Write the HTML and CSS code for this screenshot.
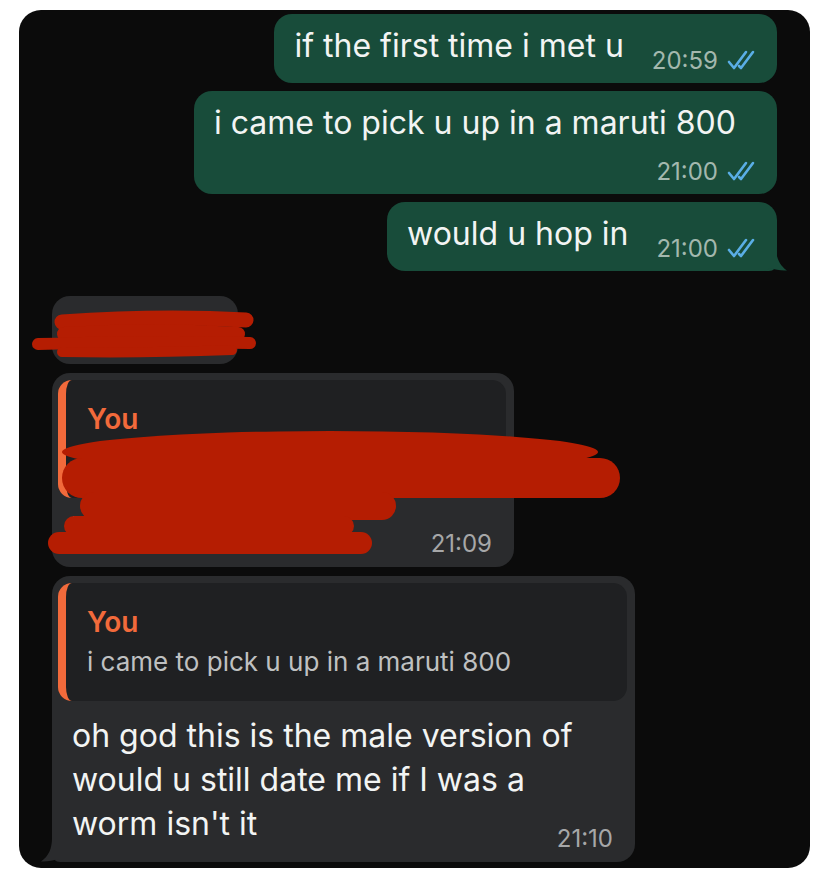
FILE: index.html
```html
<!DOCTYPE html>
<html lang="en">
<head>
    <meta charset="UTF-8">
    <meta name="viewport" content="width=device-width, initial-scale=1.0">
    <title>Chat</title>
    <link rel="stylesheet" href="styles.css">
</head>
<body>

    <div class="chat">
        <div class="bubble out">
            <span class="text">if the first time i met u</span>
            <span class="meta">
                <span class="time">20:59</span>
                <svg class="ticks" viewBox="0 0 30 20"><path d="M2 12 L7 18 L19 2"/><path d="M12 16 L14 18 L26 2"/></svg>
            </span>
        </div>

        <div class="bubble out">
            <span class="text">i came to pick u up in a maruti 800</span>
            <span class="meta next">
                <span class="time">21:00</span>
                <svg class="ticks" viewBox="0 0 30 20"><path d="M2 12 L7 18 L19 2"/><path d="M12 16 L14 18 L26 2"/></svg>
            </span>
        </div>

        <div class="bubble out tail-right">
            <span class="text">would u hop in</span>
            <span class="meta">
                <span class="time">21:00</span>
                <svg class="ticks" viewBox="0 0 30 20"><path d="M2 12 L7 18 L19 2"/><path d="M12 16 L14 18 L26 2"/></svg>
            </span>
            <svg class="tail" viewBox="0 0 24 24"><path d="M0 0 H12 C12 10 15 18 23 23.5 C17 24 11 22.5 6 21 Q2 24 0 24 Z"/></svg>
        </div>

        <div class="bubble in stub"></div>

        <div class="bubble in reply mid">
            <div class="quote">
                <div class="quote-name">You</div>
                <div class="quote-text">&nbsp;</div>
            </div>
            <div class="body">
                <span class="text">Th</span>
                <span class="meta"><span class="time">21:09</span></span>
            </div>
        </div>

        <div class="bubble in reply wide tail-left">
            <div class="quote">
                <div class="quote-name">You</div>
                <div class="quote-text">i came to pick u up in a maruti 800</div>
            </div>
            <div class="body">
                <span class="text">oh god this is the male version of<br>would u still date me if I was a<br>worm isn't it</span>
                <span class="meta"><span class="time">21:10</span></span>
            </div>
            <svg class="tail" viewBox="0 0 24 24"><path d="M24 0 H12 C12 10 9 18 1 23.5 C7 24 13 22.5 18 21 Q22 24 24 24 Z"/></svg>
        </div>
    </div>

    <!-- scribbled-out bits -->
    <svg class="scribble" viewBox="0 0 828 879">
        <g stroke-linecap="round" fill="none">
            <path d="M62 322 C120 318 190 317 246 320" stroke-width="15"/>
            <path d="M64 334 C130 330 190 331 238 334" stroke-width="14"/>
            <path d="M38 344 C110 342 190 341 250 343" stroke-width="12"/>
            <path d="M62 352 C120 353 180 352 232 350" stroke-width="10"/>
        </g>
        <g>
            <ellipse cx="330" cy="452" rx="268" ry="21"/>
            <rect x="62" y="458" width="558" height="40" rx="20"/>
            <rect x="80" y="492" width="316" height="28" rx="14"/>
            <rect x="64" y="516" width="290" height="20" rx="10"/>
            <rect x="48" y="532" width="324" height="22" rx="11"/>
        </g>
    </svg>

</body>
</html>
```

FILE: styles.css
```css
body {
    margin: 0;
    background-color: #ffffff;
    font-family: "Inter", "Liberation Sans", sans-serif;
    position: relative;
}
.chat {
    margin: 10px 18px 13px 19px;
    background-color: #0b0b0b;
    border-radius: 22px;
    padding: 4px 33px 6px;
    display: flex;
    flex-direction: column;
    gap: 8px;
    box-sizing: border-box;
}
.bubble {
    position: relative;
    box-sizing: border-box;
    max-width: 583px;
    padding: 10px 20px 9px;
    border-radius: 18px;
    font-size: 32px;
    line-height: 44px;
    display: flow-root;
}
.bubble .text {
    color: #f2f4f3;
}
.bubble.out {
    align-self: flex-end;
    background-color: #184c3a;
}
.bubble.in {
    align-self: flex-start;
    background-color: #2a2b2d;
}
.meta {
    float: right;
    margin: 24px 0 0 28px;
    line-height: 26px;
    font-size: 24px;
    display: flex;
    align-items: center;
}
.meta.next {
    margin-top: 14px;
}
.out .time {
    color: #a3b8ae;
}
.in .time {
    color: #a6a7a8;
}
.ticks {
    width: 30px;
    height: 20px;
    margin-left: 9px;
    margin-top: -3px;
}
.ticks path {
    fill: none;
    stroke: #5aaee6;
    stroke-width: 2.6;
    stroke-linecap: round;
    stroke-linejoin: round;
}
.tail {
    position: absolute;
    bottom: 0;
    width: 24px;
    height: 24px;
}
.tail-right {
    border-bottom-right-radius: 8px;
}
.tail-right .tail {
    right: -11px;
    fill: #184c3a;
}
.tail-left {
    border-bottom-left-radius: 8px;
}
.tail-left .tail {
    left: -12px;
    fill: #2a2b2d;
}
.bubble.stub {
    width: 186px;
    height: 68px;
    margin-top: 17px;
}
.bubble.reply {
    padding: 7px 8px 10px 6px;
    margin-top: 1px;
}
.bubble.mid {
    width: 462px;
}
.bubble.wide {
    width: 583px;
    margin-top: 1px;
}
.quote {
    background-color: #1f2022;
    border-left: 8px solid #f26a3b;
    border-radius: 14px;
    padding: 21px 16px 22px 21px;
}
.quote-name {
    color: #f26a3b;
    font-size: 28px;
    font-weight: 600;
    line-height: 36px;
}
.quote-text {
    margin-top: 5px;
    font-size: 26px;
    line-height: 34px;
    color: #bfc0c1;
}
.body {
    padding: 9px 14px 0;
}
.wide .body {
    padding-top: 13px;
}
.scribble {
    position: absolute;
    top: 0;
    left: 0;
    width: 828px;
    height: 879px;
    pointer-events: none;
    fill: #b51d02;
    stroke: #b51d02;
}
.scribble g + g {
    stroke: none;
}
```
